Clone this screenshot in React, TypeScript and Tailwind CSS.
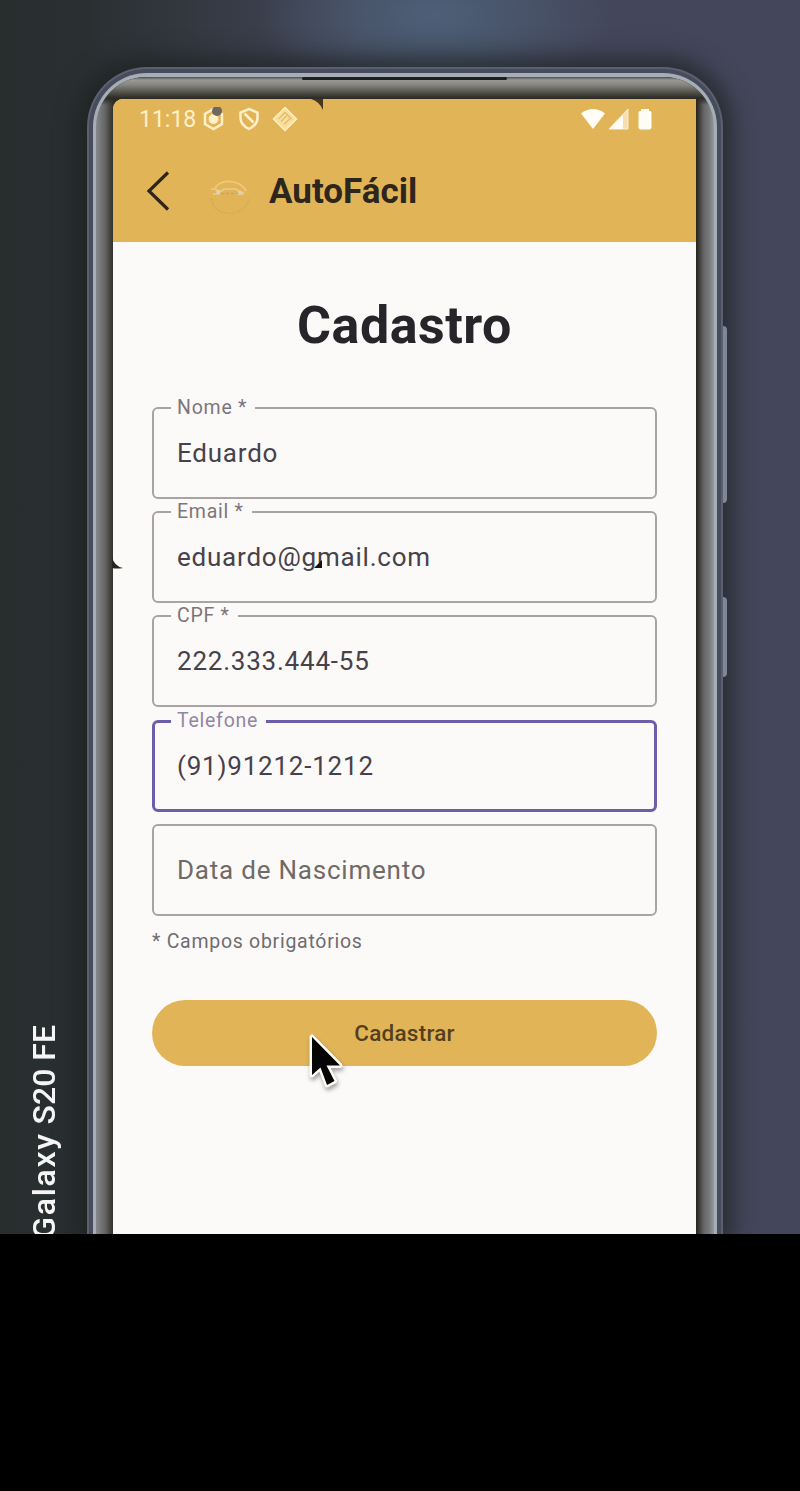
import type { ReactNode } from "react";

type FieldProps = {
  label?: string;
  value: string;
  placeholder?: boolean;
  focused?: boolean;
};

function Field({ label, value, placeholder, focused }: FieldProps) {
  return (
    <div
      className={
        "relative flex h-[92px] items-center rounded-[6px] " +
        (focused ? "border-[3px] border-[#6a5fa8] pl-[22px]" : "border-2 border-[#aaa3a3] pl-[23px]")
      }
    >
      {label && (
        <span
          className={
            "absolute bg-[#fcfaf9] pr-2 pl-1.5 text-[19.5px] leading-6 tracking-[0.75px] " +
            (focused ? "-top-[14px] left-4 text-[#9087a6]" : "-top-[13px] left-[17px] text-[#7c7679]")
          }
        >
          {label}
        </span>
      )}
      <span
        className={
          "text-[26px] leading-8 tracking-[0.78px] " +
          (placeholder ? "text-[#706a67]" : "text-[#47424a]")
        }
      >
        {value}
      </span>
    </div>
  );
}

function StatusBar() {
  return (
    <div className="flex h-10 items-center justify-between pr-11 pl-[26px] text-[#fff0c8]">
      <div className="flex items-center">
        <span className="w-[63px] pt-[2px] text-[23px] leading-7">11:18</span>
        <svg className="h-6 w-[23px]" viewBox="0 0 23 24" fill="none" stroke="currentColor">
          <path d="M11.5 2 20 7v10l-8.500 5L3 17V7z" strokeWidth="2.500" />
          <circle cx="11.500" cy="12" r="4.500" fill="currentColor" />
          <circle cx="15" cy="4" r="5" fill="#6e6662" stroke="none" />
        </svg>
        <svg className="ml-[13px] h-6 w-[22px]" viewBox="0 0 22 24" fill="none" stroke="currentColor" strokeWidth="2.500">
          <path d="M11 2 19.500 5.500V11c0 5-3.500 8.500-8.500 11C6 19.500 2.500 16 2.500 11V5.500z" />
          <path d="m6.500 6.500 9 9" />
        </svg>
        <svg className="ml-[12px] h-[26px] w-[26px]" viewBox="0 0 26 26">
          <path d="M13 1.500 24.500 13 13 24.500 1.500 13z" fill="#f8df9e" stroke="#fff0c0" strokeWidth="1.500" />
          <path d="m6.500 13 6.500-6.500 6.500 6.500M9 15.500l6-6m-3 9 6-6" fill="none" stroke="#e4bd68" strokeWidth="1.300" />
        </svg>
      </div>
      <div className="flex items-center text-[#fffdf5]">
        <svg className="h-[22px] w-6" viewBox="0 0 24 22" fill="currentColor">
          <path d="M0 5.500C7-.5 17-.5 24 5.500L12 21z" />
        </svg>
        <svg className="ml-[3px] h-[22px] w-[22px]" viewBox="0 0 22 22">
          <path d="M20 1v20H1z" fill="#f6dfad" stroke="#fbeed0" />
          <path d="M15 7v14H1z" fill="currentColor" />
        </svg>
        <svg className="ml-[8px] h-[22px] w-[14px]" viewBox="0 0 14 22" fill="currentColor">
          <path d="M3 3V1h8v2h1.500l1 1.500V20l-1.500 1.500H2L.5 20V4.500L1.500 3z" />
        </svg>
      </div>
    </div>
  );
}

function AppHeader() {
  return (
    <header className="relative h-[143px] rounded-tl-[10px] bg-[#e2b458]">
      <StatusBar />
      <svg className="absolute top-0 left-[198px] h-3 w-3" viewBox="0 0 12 12">
        <path d="M0 0h12v11Q9 3 0 0z" fill="#443820" />
      </svg>
      <div className="flex h-[103px] items-center pl-[33px]">
        <svg className="h-[42px] w-6" viewBox="0 0 24 42" fill="none" stroke="#2d261c" strokeWidth="3.200">
          <path d="M22 2.500 3 21l19 18.500" />
        </svg>
        <svg className="mt-3 ml-[39px] h-9 w-[42px]" viewBox="0 0 42 36" fill="none">
          <path d="M6 9C11 0 31 0 37 12" stroke="#efc977" strokeWidth="2" />
          <path d="M2 19c2 20 34 21 38 0" stroke="#ceaa53" strokeWidth="1.300" strokeDasharray="2 1.500" />
          <path d="M2 10q8 0 9 3l4-3h12l4 3 4 1M4 15h7m16 0h8" stroke="#eacb89" strokeWidth="1.600" />
          <path d="M12 14.500h17" stroke="#c7a55a" strokeWidth="1.300" strokeDasharray="3 2" />
          <circle cx="9" cy="13" r="2" fill="#ddd1bd" />
          <circle cx="31" cy="13.500" r="2" fill="#ddd1bd" />
        </svg>
        <span className="ml-[18px] pt-[3px] text-[35px] leading-10 font-bold text-[#2d261c]">AutoFácil</span>
      </div>
    </header>
  );
}

function PhoneFrame({ children }: { children: ReactNode }) {
  return (
    <div className="relative mt-[67px] ml-[87px] h-[1167px] w-[636px] rounded-t-[60px] border-2 border-b-0 border-[#5b6070] bg-[#464c5c] px-1 pt-1 shadow-[0_0_22px_10px_rgba(24,30,29,0.65)]">
      <div className="h-full rounded-t-[54px] bg-[#a5adb6] px-[3px] pt-[4px]">
        <div className="h-full rounded-t-[50px] bg-[linear-gradient(90deg,#85898d_0px,#77787a_4px,#656565_9px,#4c4a46_13px,#33312c_17px,#292720_580px,#2b2922_601px,#66676a_608px,#777979_613px,#929a9f_618px)]">
          <div className="h-full rounded-t-[50px] bg-[linear-gradient(180deg,#4d4f52_0px,#9a9a92_3px,#86867e_8px,#5b5b53_14px,#2c2b25_21px,transparent_28px)] pt-[22px] pl-[17px]">
            <div className="h-full w-[583px] rounded-tl-[10px] bg-[#fcfaf9]">{children}</div>
          </div>
        </div>
      </div>
      <span className="absolute top-[8px] left-[213px] h-[3px] w-[205px] rounded-full bg-[#1d1e1e]" />
      <span className="absolute top-[257px] -right-[6px] h-[177px] w-[4px] rounded-r-sm bg-[#7d8796]" />
      <span className="absolute top-[528px] -right-[6px] h-[80px] w-[4px] rounded-r-sm bg-[#7d8796]" />
    </div>
  );
}

export default function App() {
  return (
    <main className="h-[1491px] w-[800px] overflow-hidden bg-black font-['Roboto','Liberation_Sans',sans-serif]">
      <div className="relative flow-root h-[1234px] overflow-hidden bg-[radial-gradient(ellipse_180px_90px_at_435px_15px,#4d6078_0%,transparent_100%),linear-gradient(90deg,#282e2e_0px,#2a3032_90px,#434659_360px,#44475b_800px)]">
        <PhoneFrame>
          <AppHeader />
          <div className="pr-[39px] pl-[39px]">
            <h1 className="pt-[52px] text-center text-[52px] leading-[64px] font-bold tracking-[0.5px] text-[#28252a]">
              Cadastro
            </h1>
            <form className="mt-[49px] flex flex-col gap-[12.2px]">
              <Field label="Nome *" value="Eduardo" />
              <Field label="Email *" value="eduardo@gmail.com" />
              <Field label="CPF *" value="222.333.444-55" />
              <Field label="Telefone" value="(91)91212-1212" focused />
              <Field value="Data de Nascimento" placeholder />
            </form>
            <p className="mt-[14px] text-[19.5px] leading-6 tracking-[0.72px] text-[#716c70]">
              * Campos obrigatórios
            </p>
            <button className="mt-[46px] flex h-[66px] w-full items-center justify-center rounded-full bg-[#e2b458] pt-[2px] text-[22.5px] font-medium tracking-[0.25px] text-[#54401d]">
              Cadastrar
            </button>
          </div>
        </PhoneFrame>
        <span className="absolute top-[1025px] left-[24px] rotate-180 text-[32px] leading-10 font-medium whitespace-nowrap text-[#f4f5f4] [writing-mode:vertical-rl]">
          <span className="tracking-[1.7px]">Galaxy</span> S20 FE
        </span>
        <svg className="absolute top-[557px] left-[112px] h-3 w-3" viewBox="0 0 12 12">
          <path d="M0 0Q2 9 11 11 5 12 0 11z" fill="#292622" />
        </svg>
        <svg className="absolute top-[560px] left-[314px] h-2 w-2" viewBox="0 0 8 8">
          <path d="M8 0v8H0z" fill="#151313" />
        </svg>
        <svg
          className="absolute top-[1030px] left-[306px] h-[62px] w-[42px] drop-shadow-[1px_3px_2px_rgba(0,0,0,0.35)]"
          viewBox="0 0 42 62"
        >
          <path
            d="M6 7v38l8.500-7.500L21 55l7.500-4-8-15.500H34z"
            fill="#050505"
            stroke="#fffdf5"
            strokeWidth="5"
            strokeLinejoin="round"
            paintOrder="stroke"
          />
        </svg>
      </div>
    </main>
  );
}
